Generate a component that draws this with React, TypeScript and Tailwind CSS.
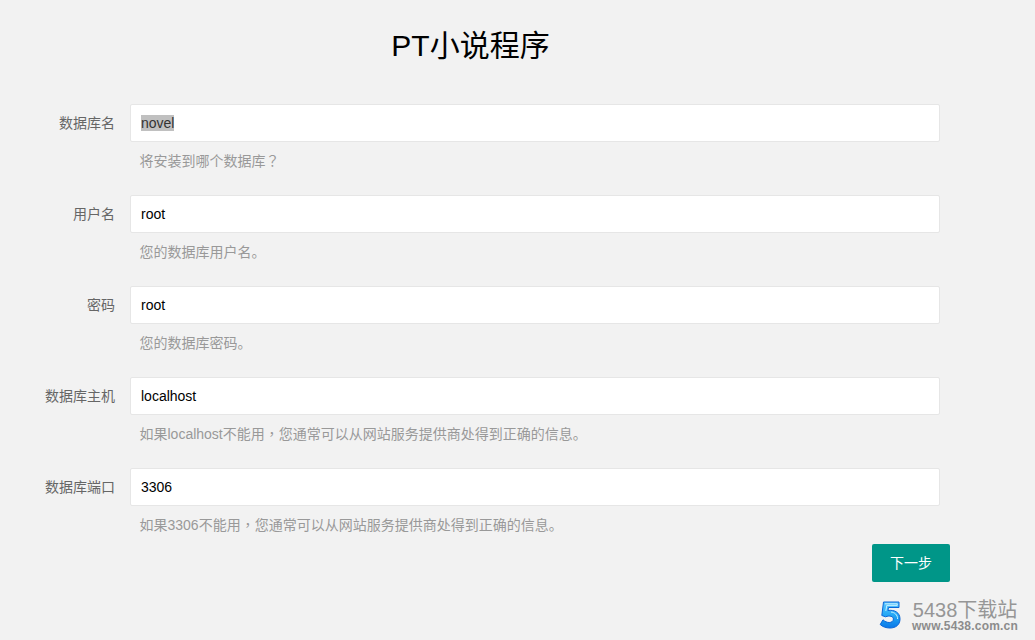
import type { ReactNode } from "react"

// comma and question mark sit centred in their cell in the reference, as in the TC font
const Punct = ({ children }: { children: string }) => <span className="font-['Noto_Sans_CJK_TC'] leading-none">{children}</span>

const fields: { label: string; value: string; help: ReactNode; selected?: boolean }[] = [
  { label: "数据库名", value: "novel", help: <>将安装到哪个数据库<Punct>？</Punct></>, selected: true },
  { label: "用户名", value: "root", help: "您的数据库用户名。" },
  { label: "密码", value: "root", help: "您的数据库密码。" },
  { label: "数据库主机", value: "localhost", help: <>如果localhost不能用<Punct>，</Punct>您通常可以从网站服务提供商处得到正确的信息。</> },
  { label: "数据库端口", value: "3306", help: <>如果3306不能用<Punct>，</Punct>您通常可以从网站服务提供商处得到正确的信息。</> },
]

function Field({ label, value, help, selected }: { label: string; value: string; help: ReactNode; selected?: boolean }) {
  return (
    <div className="h-[91px]">
      <div className="flex items-center">
        <label className="w-[115px] mr-[15px] text-right text-[14px] text-[#666666]">{label}</label>
        <div className="flex-1 h-[38px] flex items-center pl-[10px] bg-white border border-[#e6e6e6] rounded-[2px] text-[14px] text-black">
          {selected ? <span className="bg-[#c0c0c0] text-[#333333] leading-[16px]">{value}</span> : value}
        </div>
      </div>
      <div className="ml-[139.5px] mt-[9px] text-[14px] leading-[20px] text-[#999999]">{help}</div>
    </div>
  )
}

function Logo() {
  return (
    <div className="absolute right-[17px] bottom-[7px] flex items-center gap-[11px]">
      <svg className="mb-[3px]" width="22" height="28" viewBox="0 0 22 28">
        <defs>
          <linearGradient id="five" x1="0" y1="0" x2="0" y2="1">
            <stop offset="0" stopColor="#5cc8ff" />
            <stop offset="0.55" stopColor="#1fa4f4" />
            <stop offset="1" stopColor="#0b78e8" />
          </linearGradient>
        </defs>
        <path
          d="M4.5 1H20V6.5H9.5L9 9.5C15.5 8.5 21 11.5 21 18C21 24 16.5 27 11 27C7 27 3.5 25.8 1.2 23.5L4 18.8C5.8 20.5 8 21.5 10.2 21.5C12.6 21.5 14.4 20.2 14.4 18C14.4 15.4 10.8 14.2 6.5 15.8L2.8 14.5Z"
          fill="url(#five)"
          stroke="#0a66d8"
          strokeWidth="1"
        />
        <path d="M6 2.8H18.2V4.4H7.8L6.8 10" fill="none" stroke="#c8f0ff" strokeWidth="1" />
        <path d="M12 11C15.5 11.4 18.6 13.6 18.6 18" fill="none" stroke="#c8f0ff" strokeWidth="1" />
      </svg>
      <div className="flex flex-col items-center text-[#969696]">
        <span className="text-[20px] leading-[20px]">5438下载站</span>
        <span className="text-[12px] leading-[13px] tracking-[0.2px] font-bold text-[#8c8c8c]">www.5438.com.cn</span>
      </div>
    </div>
  )
}

export default function App() {
  return (
    <div className="relative min-h-[640px] bg-[#f2f2f2] overflow-hidden font-['Liberation_Sans','Noto_Sans_CJK_SC',sans-serif]">
      <div className="w-[940px]">
        <h1 className="h-[104px] pt-[25px] pl-[1px] text-center text-[30px] leading-[42px] text-black">PT小说程序</h1>
        {fields.map((field) => (
          <Field key={field.label} {...field} />
        ))}
      </div>
      <div className="w-[950px] -mt-[15px] flex justify-end">
        <button className="w-[78px] h-[38px] bg-[#009688] rounded-[2px] text-[14px] text-white">下一步</button>
      </div>
      <Logo />
    </div>
  )
}
